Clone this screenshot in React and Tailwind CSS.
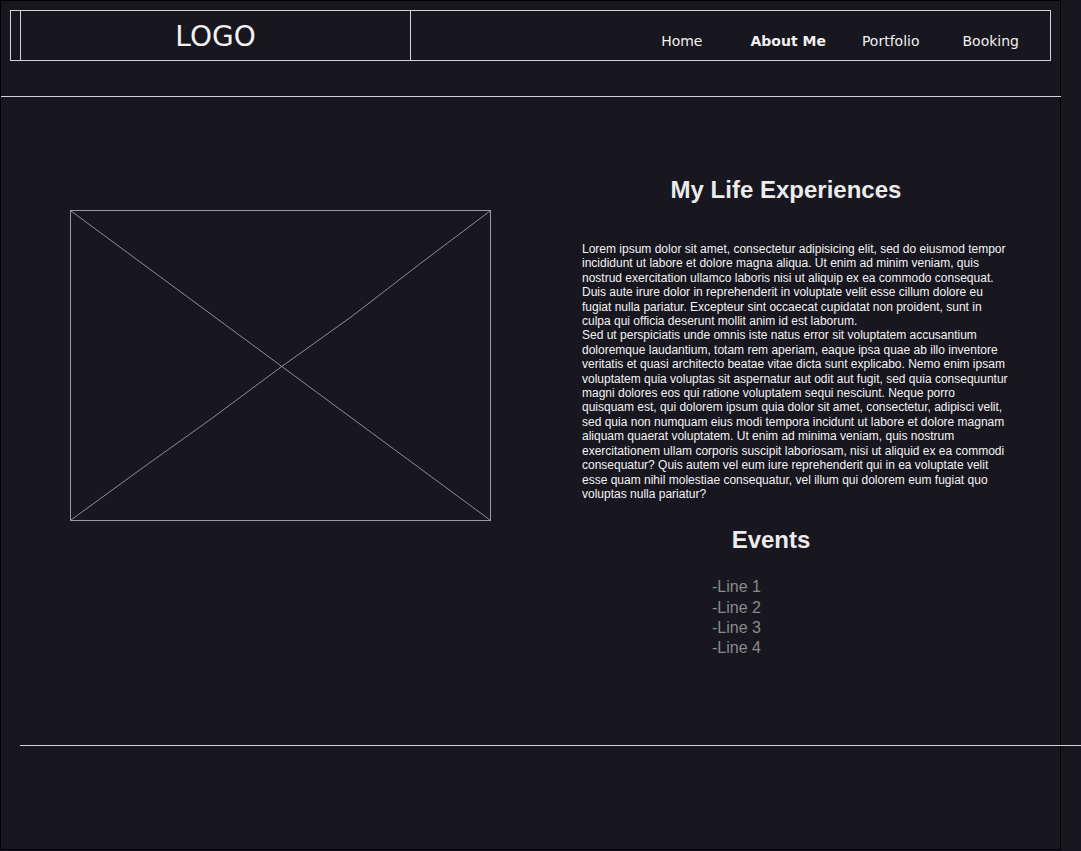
const navItems = [
  { label: "Home", className: "" },
  { label: "About Me", className: "ml-[48px] font-bold" },
  { label: "Portfolio", className: "ml-[36px]" },
  { label: "Booking", className: "ml-[43px]" },
];

const events = ["-Line 1", "-Line 2", "-Line 3", "-Line 4"];

// line breaks follow the reference wrapping
const paragraphs = [
  [
    "Lorem ipsum dolor sit amet, consectetur adipisicing elit, sed do eiusmod tempor",
    "incididunt ut labore et dolore magna aliqua. Ut enim ad minim veniam, quis",
    "nostrud exercitation ullamco laboris nisi ut aliquip ex ea commodo consequat.",
    "Duis aute irure dolor in reprehenderit in voluptate velit esse cillum dolore eu",
    "fugiat nulla pariatur. Excepteur sint occaecat cupidatat non proident, sunt in",
    "culpa qui officia deserunt mollit anim id est laborum.",
  ],
  [
    "Sed ut perspiciatis unde omnis iste natus error sit voluptatem accusantium",
    "doloremque laudantium, totam rem aperiam, eaque ipsa quae ab illo inventore",
    "veritatis et quasi architecto beatae vitae dicta sunt explicabo. Nemo enim ipsam",
    "voluptatem quia voluptas sit aspernatur aut odit aut fugit, sed quia consequuntur",
    "magni dolores eos qui ratione voluptatem sequi nesciunt. Neque porro",
    "quisquam est, qui dolorem ipsum quia dolor sit amet, consectetur, adipisci velit,",
    "sed quia non numquam eius modi tempora incidunt ut labore et dolore magnam",
    "aliquam quaerat voluptatem. Ut enim ad minima veniam, quis nostrum",
    "exercitationem ullam corporis suscipit laboriosam, nisi ut aliquid ex ea commodi",
    "consequatur? Quis autem vel eum iure reprehenderit qui in ea voluptate velit",
    "esse quam nihil molestiae consequatur, vel illum qui dolorem eum fugiat quo",
    "voluptas nulla pariatur?",
  ],
];

const ImagePlaceholder = () => (
  <div className="w-[421px] h-[311px] border border-[#9c9c9c]">
    <svg width="419" height="309" viewBox="0 0 419 309" className="block">
      <line x1="0" y1="0" x2="419" y2="309" stroke="#8e8e8e" strokeWidth="1" />
      <path
        d="M0 309 L70 258 L140 208 L210 156 L280 106 L350 52 L419 0"
        fill="none"
        stroke="#8e8e8e"
        strokeWidth="1"
      />
    </svg>
  </div>
);

const App = () => {
  return (
    <div className="w-[1081px] h-[851px] bg-[#18161f] overflow-hidden">
      <div className="w-[1061px] h-[850px] border border-black flex flex-col">
        {/* header */}
        <div className="mt-[9px] ml-[9px] w-[1041px] h-[51px] border border-[#d4d4d4] flex">
          <div className="ml-[9px] w-[391px] h-full border-l border-r border-[#d4d4d4] flex items-center justify-center">
            <span className="text-[28px] leading-none text-[#f2f2f2] font-['DejaVu_Sans',sans-serif] pt-[3px]">
              LOGO
            </span>
          </div>
          <nav className="ml-auto pr-[31px] pt-[12px] flex items-center text-[14px] text-[#f0f0f0] font-['DejaVu_Sans',sans-serif]">
            {navItems.map((item) => (
              <span key={item.label} className={item.className}>
                {item.label}
              </span>
            ))}
          </nav>
        </div>

        <div className="mt-[35px] w-[1060px] border-t border-[#d4d4d4]" />

        {/* main */}
        <div className="h-[648px] flex items-start font-['Liberation_Sans',Arial,sans-serif]">
          <div className="ml-[69px] mt-[113px]">
            <ImagePlaceholder />
          </div>
          <div className="ml-[91px] w-[430px] flex flex-col">
            <h1 className="mt-[80px] pr-[22px] text-center text-[24px] leading-[26px] font-bold text-[#ececec]">
              My Life Experiences
            </h1>
            <div className="mt-[39px] text-[12px] leading-[14.4px] text-[#f4f4f4] whitespace-nowrap">
              {paragraphs.map((lines, i) => (
                <p key={i}>
                  {lines.map((line, j) => (
                    <span key={j} className="block">
                      {line}
                    </span>
                  ))}
                </p>
              ))}
            </div>
            <h2 className="mt-[26px] pr-[52px] text-center text-[24px] leading-[26px] font-bold text-[#ececec]">
              Events
            </h2>
            <ul className="mt-[24px] pl-[130px] text-[16px] leading-[20.3px] text-[#8a8a8a]">
              {events.map((line) => (
                <li key={line}>{line}</li>
              ))}
            </ul>
          </div>
        </div>

        <div className="ml-[19px] w-[1070px] border-t border-[#d4d4d4]" />
      </div>
    </div>
  );
};

export default App;
